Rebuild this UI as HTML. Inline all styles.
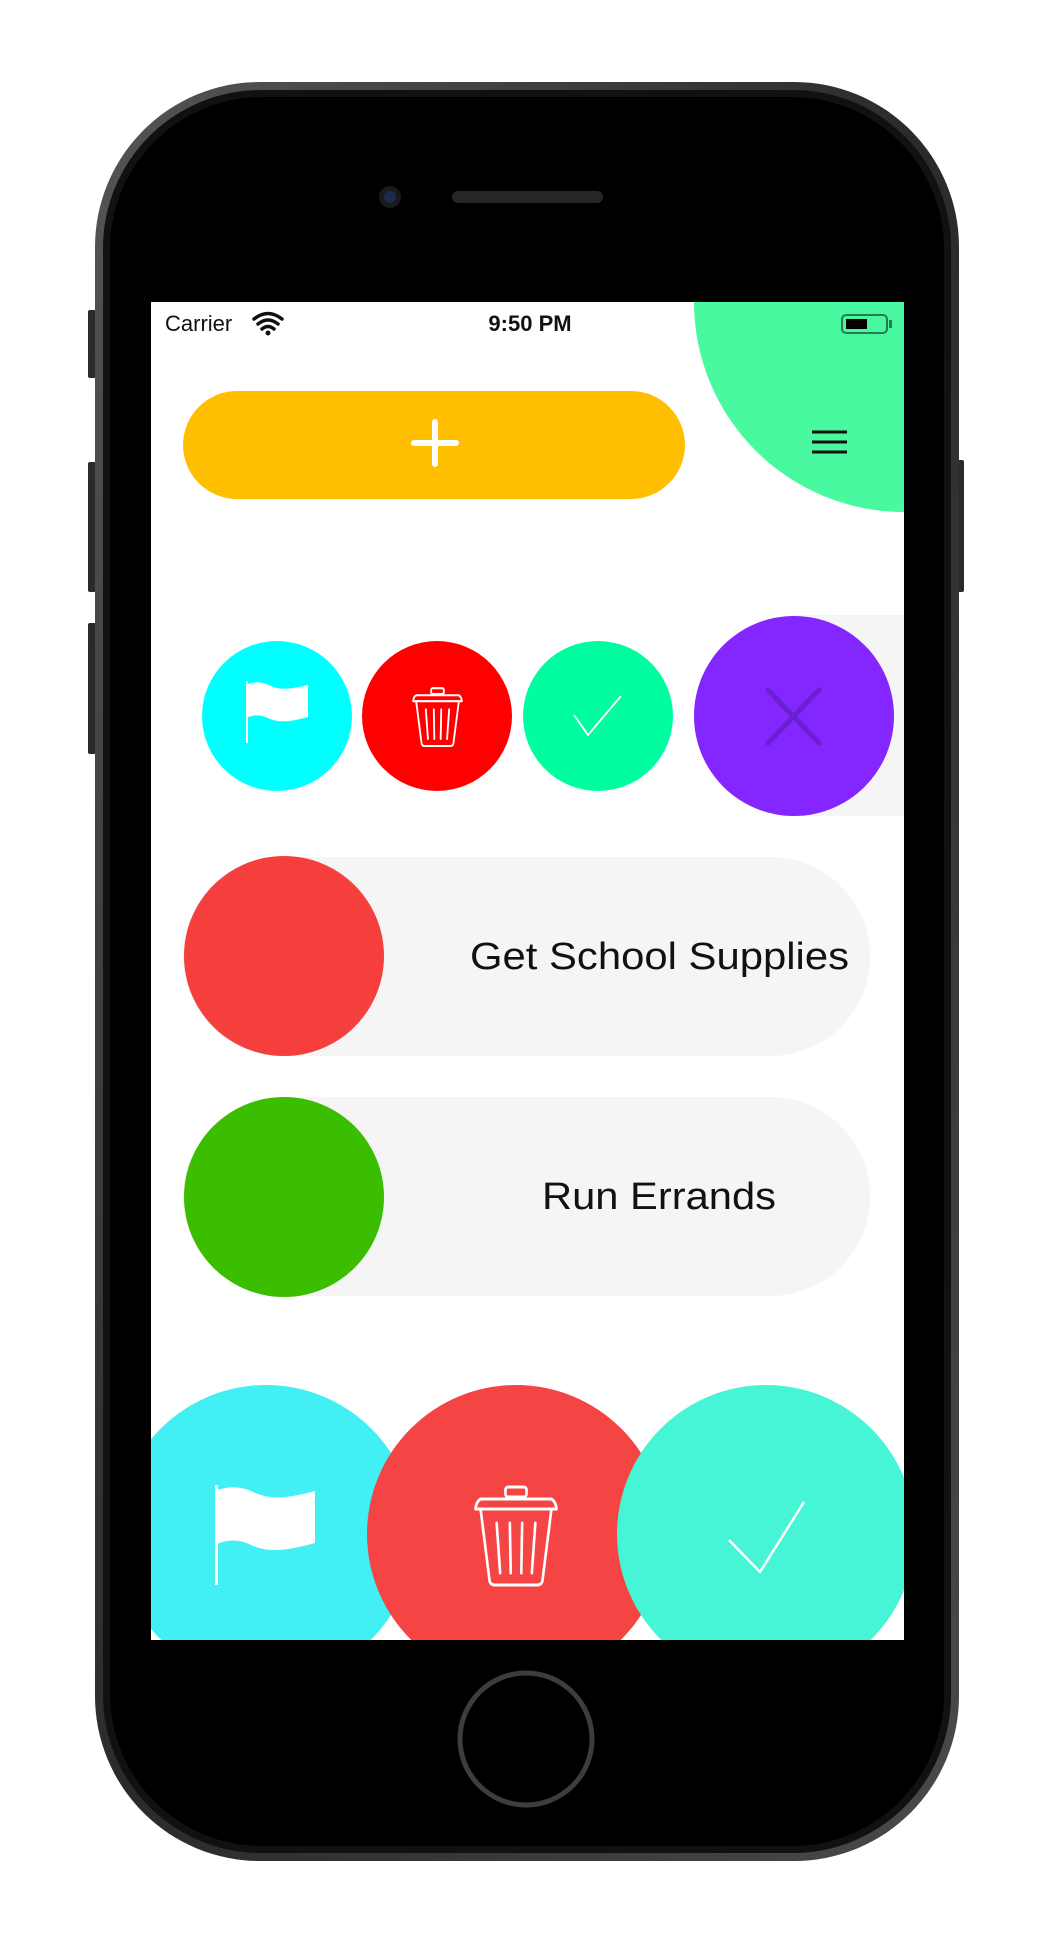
<!DOCTYPE html>
<html><head><meta charset="utf-8"><style>
html,body{margin:0;padding:0;background:#fff;width:1050px;height:1934px;overflow:hidden}
svg{display:block}
text{font-family:"Liberation Sans",sans-serif}
</style></head><body>
<svg width="1050" height="1934" viewBox="0 0 1050 1934" xmlns="http://www.w3.org/2000/svg">
<defs>
<clipPath id="scr"><rect x="151" y="302" width="753" height="1338"/></clipPath>
<linearGradient id="rim" x1="0" y1="0" x2="1" y2="1">
<stop offset="0" stop-color="#555"/><stop offset="0.5" stop-color="#2a2a2a"/><stop offset="1" stop-color="#4a4a4a"/></linearGradient>
<g id="trash" fill="none" stroke="#fff" stroke-linecap="round" stroke-linejoin="round">
<rect x="38" y="2" width="24" height="10" rx="3"/>
<path d="M10 14 L90 14 Q95 16 96 24 L4 24 Q5 16 10 14 Z"/>
<path d="M10 26 L20 96 Q21 100 26 100 L74 100 Q79 100 80 96 L90 26"/>
<path d="M28 38 L32 88 M43 38 L44 88 M57 38 L56 88 M72 38 L68 88"/>
</g>
<g id="flag" fill="#fff">
<rect x="0" y="0" width="3" height="100"/>
<path d="M0 6 C12 1 24 1 36 6 C50 13 64 16 100 6 L100 58 C64 68 50 66 36 60 C24 54 12 54 0 60 Z"/>
</g>
</defs>
<rect x="88" y="310" width="8" height="68" rx="2" fill="#2a2a2a"/>
<rect x="88" y="462" width="8" height="130" rx="2" fill="#2a2a2a"/>
<rect x="88" y="623" width="8" height="131" rx="2" fill="#2a2a2a"/>
<rect x="956" y="460" width="8" height="132" rx="2" fill="#2a2a2a"/>
<rect x="95" y="82" width="864" height="1779" rx="165" fill="url(#rim)"/>
<rect x="103" y="90" width="848" height="1763" rx="158" fill="#111"/>
<rect x="110" y="97" width="834" height="1749" rx="152" fill="#000"/>
<circle cx="390" cy="197" r="11" fill="#1a1a1a"/>
<circle cx="390" cy="197" r="6" fill="#1d2a4a"/>
<rect x="452" y="191" width="151" height="12" rx="6" fill="#262626"/>
<circle cx="526" cy="1739" r="66" fill="none" stroke="#3d3d3d" stroke-width="5"/>
<rect x="151" y="302" width="753" height="1338" fill="#fff"/>
<g clip-path="url(#scr)">
<circle cx="904" cy="302" r="210" fill="#48F9A0"/>
<text x="165" y="331" font-size="22" fill="#111">Carrier</text>
<path d="M254 319 Q268 308 282 319 M258 324 Q268 316 278 324 M262 329 Q268 324 274 329" stroke="#111" stroke-width="3.5" fill="none" stroke-linecap="round"/>
<circle cx="268" cy="333" r="2.5" fill="#111"/>
<text x="530" y="331" font-size="22" font-weight="bold" fill="#111" text-anchor="middle">9:50 PM</text>
<rect x="842" y="315" width="45" height="18" rx="4" fill="none" stroke="#2a7a50" stroke-width="2"/>
<rect x="846" y="319" width="21" height="10" fill="#000"/>
<rect x="889" y="320" width="3" height="8" fill="#2a7a50"/>
<path d="M812 432 H847 M812 442 H847 M812 452 H847" stroke="#111" stroke-width="3"/>
<rect x="183" y="391" width="502" height="108" rx="54" fill="#FFBF00"/>
<path d="M435 422 V464 M414 443 H456" stroke="#fff" stroke-width="6" stroke-linecap="round"/>
<rect x="792" y="615" width="120" height="201" fill="#F5F5F5"/>
<circle cx="277" cy="716" r="75" fill="#00FFFF"/>
<circle cx="437" cy="716" r="75" fill="#FF0000"/>
<circle cx="598" cy="716" r="75" fill="#00FDA0"/>
<circle cx="794" cy="716" r="100" fill="#8426FF"/>
<use href="#flag" transform="translate(246,681) scale(0.62)"/>
<use href="#trash" transform="translate(411,687) scale(0.53,0.59)" stroke-width="3.5"/>
<path d="M574 715 L588 735 L621 696" stroke="#fff" stroke-width="1.8" fill="none"/>
<path d="M768 690 L819 743 M819 690 L768 743" stroke="#6A1FD0" stroke-width="5" stroke-linecap="round"/>
<rect x="183" y="857" width="687" height="199" rx="99.5" fill="#F5F5F5"/>
<circle cx="284" cy="956" r="100" fill="#F43F3D"/>
<text x="470" y="969" font-size="38" fill="#111" textLength="379" lengthAdjust="spacingAndGlyphs">Get School Supplies</text>
<rect x="183" y="1097" width="687" height="199" rx="99.5" fill="#F5F5F5"/>
<circle cx="284" cy="1197" r="100" fill="#3BBD00"/>
<text x="542" y="1209" font-size="38" fill="#111" textLength="234" lengthAdjust="spacingAndGlyphs">Run Errands</text>
<circle cx="266" cy="1534" r="149" fill="#42F0F4"/>
<circle cx="516" cy="1534" r="149" fill="#F44444"/>
<circle cx="766" cy="1534" r="149" fill="#45F5D5"/>
<use href="#flag" transform="translate(215,1485)"/>
<use href="#trash" transform="translate(472,1485) scale(0.88,1)" stroke-width="3"/>
<path d="M729 1540 L760 1572 L804 1502" stroke="#fff" stroke-width="2.5" fill="none"/>
</g>
</svg>
</body></html>
